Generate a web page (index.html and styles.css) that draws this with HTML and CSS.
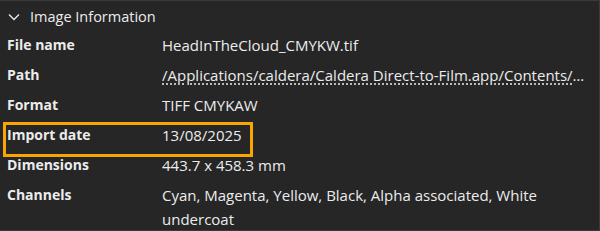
FILE: index.html
```html
<!DOCTYPE html>
<html lang="en">
<head>
    <meta charset="UTF-8">
    <title>Image Information</title>
    <link rel="stylesheet" href="styles.css">
</head>
<body>
    <div class="panel">
        <div class="head">
            <svg class="chevron" width="12" height="8" viewBox="0 0 12 8">
                <path d="M1 1.5 L6 6.5 L11 1.5" fill="none" stroke="#e6e6e6" stroke-width="1.4"/>
            </svg>
            <span>Image Information</span>
        </div>
        <div class="rows">
            <div class="row">
                <div class="label">File name</div>
                <div class="value">HeadInTheCloud_CMYKW.tif</div>
            </div>
            <div class="row">
                <div class="label">Path</div>
                <div class="value path">/Applications/caldera/Caldera Direct-to-Film.app/Contents/Resources/HeadInTheCloud_CMYKW.tif</div>
            </div>
            <div class="row">
                <div class="label">Format</div>
                <div class="value">TIFF CMYKAW</div>
            </div>
            <div class="row mark">
                <div class="label">Import date</div>
                <div class="value">13/08/2025</div>
            </div>
            <div class="row">
                <div class="label">Dimensions</div>
                <div class="value">443.7 x 458.3 mm</div>
            </div>
            <div class="row">
                <div class="label">Channels</div>
                <div class="value">Cyan, Magenta, Yellow, Black, Alpha associated, White undercoat</div>
            </div>
        </div>
    </div>
</body>
</html>
```

FILE: styles.css
```css
*{
    margin: 0;
    padding: 0;
    box-sizing: border-box;
}
body{
    background: #262626;
    color: #ececec;
    font-family: 'Open Sans', sans-serif;
    font-size: 15px;
}
.panel{
    width: 600px;
    height: 231px;
    border-top: 1px solid #3a3a3a;
    border-right: 1px solid #3a3a3a;
    border-bottom: 1px solid #3a3a3a;
    overflow: hidden;
}
.head{
    display: flex;
    align-items: center;
    height: 29px;
    padding: 2px 0 0 8px;
    font-size: 14.5px;
}
.chevron{
    margin-right: 10px;
}
.row{
    display: flex;
    padding: 3px 0;
    line-height: 24px;
}
.label{
    width: 162px;
    flex: none;
    padding-left: 7px;
    font-size: 14px;
    font-weight: bold;
}
.value{
    flex: 1;
    min-width: 0;
    padding-right: 14px;
}
.path{
    white-space: nowrap;
    overflow: hidden;
    text-overflow: ellipsis;
    text-decoration: underline dotted;
    text-underline-offset: 3px;
}
.mark{
    position: relative;
}
.mark::after{
    content: '';
    position: absolute;
    left: 3px;
    top: 2px;
    width: 244px;
    height: 29px;
    border: 3px solid #f9a602;
}
```
